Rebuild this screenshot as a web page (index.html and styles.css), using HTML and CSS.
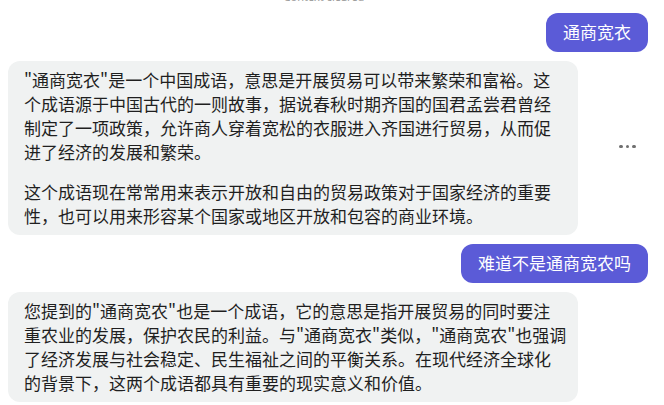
FILE: index.html
```html
<!DOCTYPE html>
<html lang="zh-CN">
<head>
<meta charset="utf-8">
<title>Chat</title>
<link rel="stylesheet" href="styles.css">
</head>
<body>
<div class="chat">
  <div class="notice">Context cleared</div>

  <div class="row row-user">
    <div class="bubble bubble-user">通商宽衣</div>
  </div>

  <div class="row row-bot">
    <div class="bubble bubble-bot">
      <p>"通商宽衣"是一个中国成语，意思是开展贸易可以带来繁荣和富裕。这<br>个成语源于中国古代的一则故事，据说春秋时期齐国的国君孟尝君曾经<br>制定了一项政策，允许商人穿着宽松的衣服进入齐国进行贸易，从而促<br>进了经济的发展和繁荣。</p>
      <p>这个成语现在常常用来表示开放和自由的贸易政策对于国家经济的重要<br>性，也可以用来形容某个国家或地区开放和包容的商业环境。</p>
    </div>
    <div class="more" aria-label="更多">
      <span class="dot"></span><span class="dot"></span><span class="dot"></span>
    </div>
  </div>

  <div class="row row-user">
    <div class="bubble bubble-user">难道不是通商宽农吗</div>
  </div>

  <div class="row row-bot">
    <div class="bubble bubble-bot">
      <p>您提到的"通商宽农"也是一个成语，它的意思是指开展贸易的同时要注<br>重农业的发展，保护农民的利益。与"通商宽衣"类似，"通商宽农"也强调<br>了经济发展与社会稳定、民生福祉之间的平衡关系。在现代经济全球化<br>的背景下，这两个成语都具有重要的现实意义和价值。</p>
    </div>
  </div>
</div>
</body>
</html>
```

FILE: styles.css
```css
* {
  box-sizing: border-box;
}

html, body {
  margin: 0;
  padding: 0;
  background: #ffffff;
  overflow: hidden;
}

body {
  font-family: "Noto Sans CJK SC", "Noto Sans", sans-serif;
  color: #1f1f1f;
}

.chat {
  display: flex;
  flex-direction: column;
  gap: 9px;
  padding: 0 16px 0 8px;
}

.notice {
  margin-top: -10px;
  height: 14px;
  font-family: "Noto Sans", sans-serif;
  font-size: 11px;
  line-height: 14px;
  color: #9a9a9a;
  text-align: center;
  padding-right: 8px;
}

.row {
  display: flex;
  align-items: center;
}

.row-user {
  justify-content: flex-end;
}

.bubble {
  font-size: 17px;
  line-height: 24px;
  border-radius: 12px;
}

.bubble-user {
  background: #5b5bd7;
  color: #ffffff;
  padding: 7px 17px 8px;
}

.bubble-bot {
  width: 570px;
  flex: none;
  background: #f0f2f2;
  padding: 7px 16px;
  white-space: nowrap;
}

.bubble-bot p {
  margin: 0;
}

.bubble-bot p + p {
  margin-top: 16px;
}

.more {
  display: flex;
  gap: 3px;
  margin-left: 41px;
  margin-top: -3px;
}

.dot {
  width: 3.5px;
  height: 3.5px;
  border-radius: 50%;
  background: #707070;
}
```
